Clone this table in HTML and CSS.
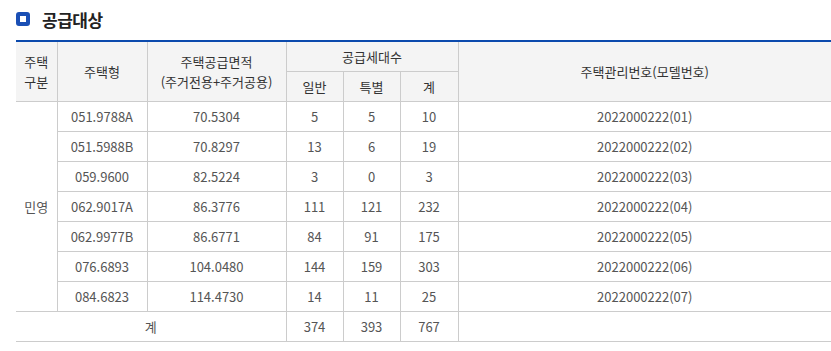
FILE: index.html
```html
<!DOCTYPE html>
<html lang="ko">
<head>
<meta charset="utf-8">
<link rel="stylesheet" href="styles.css">
</head>
<body>
<div class="page">
  <h2 class="title"><span class="ico"></span>공급대상</h2>
  <table class="tbl">
    <colgroup>
      <col class="c1"><col class="c2"><col class="c3"><col class="c4"><col class="c5"><col class="c6"><col class="c7">
    </colgroup>
    <thead>
      <tr class="h1">
        <th rowspan="2" class="first">주택<br>구분</th>
        <th rowspan="2">주택형</th>
        <th rowspan="2">주택공급면적<br>(주거전용+주거공용)</th>
        <th colspan="3">공급세대수</th>
        <th rowspan="2">주택관리번호(모델번호)</th>
      </tr>
      <tr class="h2">
        <th>일반</th><th>특별</th><th>계</th>
      </tr>
    </thead>
    <tbody>
      <tr><td rowspan="7" class="first">민영</td><td>051.9788A</td><td>70.5304</td><td>5</td><td>5</td><td>10</td><td>2022000222(01)</td></tr>
      <tr><td>051.5988B</td><td>70.8297</td><td>13</td><td>6</td><td>19</td><td>2022000222(02)</td></tr>
      <tr><td>059.9600</td><td>82.5224</td><td>3</td><td>0</td><td>3</td><td>2022000222(03)</td></tr>
      <tr><td>062.9017A</td><td>86.3776</td><td>111</td><td>121</td><td>232</td><td>2022000222(04)</td></tr>
      <tr><td>062.9977B</td><td>86.6771</td><td>84</td><td>91</td><td>175</td><td>2022000222(05)</td></tr>
      <tr><td>076.6893</td><td>104.0480</td><td>144</td><td>159</td><td>303</td><td>2022000222(06)</td></tr>
      <tr><td>084.6823</td><td>114.4730</td><td>14</td><td>11</td><td>25</td><td>2022000222(07)</td></tr>
      <tr><td colspan="3" class="first">계</td><td>374</td><td>393</td><td>767</td><td></td></tr>
    </tbody>
  </table>
</div>
</body>
</html>
```
FILE: styles.css
```css
html, body {
  margin: 0;
  padding: 0;
  background: #fff;
}
body {
  font-family: "Noto Sans CJK KR", "Noto Sans", sans-serif;
  color: #555;
}
.page {
  padding: 8px 0 0 16px;
}
.title {
  display: flex;
  align-items: center;
  margin: 0;
  height: 22px;
  font-size: 17px;
  font-weight: bold;
  color: #222;
  letter-spacing: -0.5px;
}
.ico {
  width: 14px;
  height: 14px;
  box-sizing: border-box;
  border: 4px solid #1a4fb5;
  border-radius: 3px;
  background: #fff;
  margin-right: 12px;
}
.tbl {
  margin-top: 10px;
  width: 815px;
  border-collapse: collapse;
  table-layout: fixed;
  border-top: 2px solid #0b4aad;
  font-size: 13px;
}
.c1 { width: 41px; }
.c2 { width: 90px; }
.c3 { width: 139px; }
.c4 { width: 57px; }
.c5 { width: 57px; }
.c6 { width: 58px; }
.c7 { width: 373px; }
.tbl th, .tbl td {
  border-left: 1px solid #ccc;
  border-bottom: 1px solid #ccc;
  text-align: center;
  padding: 0;
  line-height: 20px;
}
.tbl th {
  background: #f4f4f4;
  font-weight: normal;
  color: #333;
}
.tbl .first {
  border-left: none;
}
.h1 th, .h2 th { height: 29px; }
.tbl td { height: 29px; }
```
